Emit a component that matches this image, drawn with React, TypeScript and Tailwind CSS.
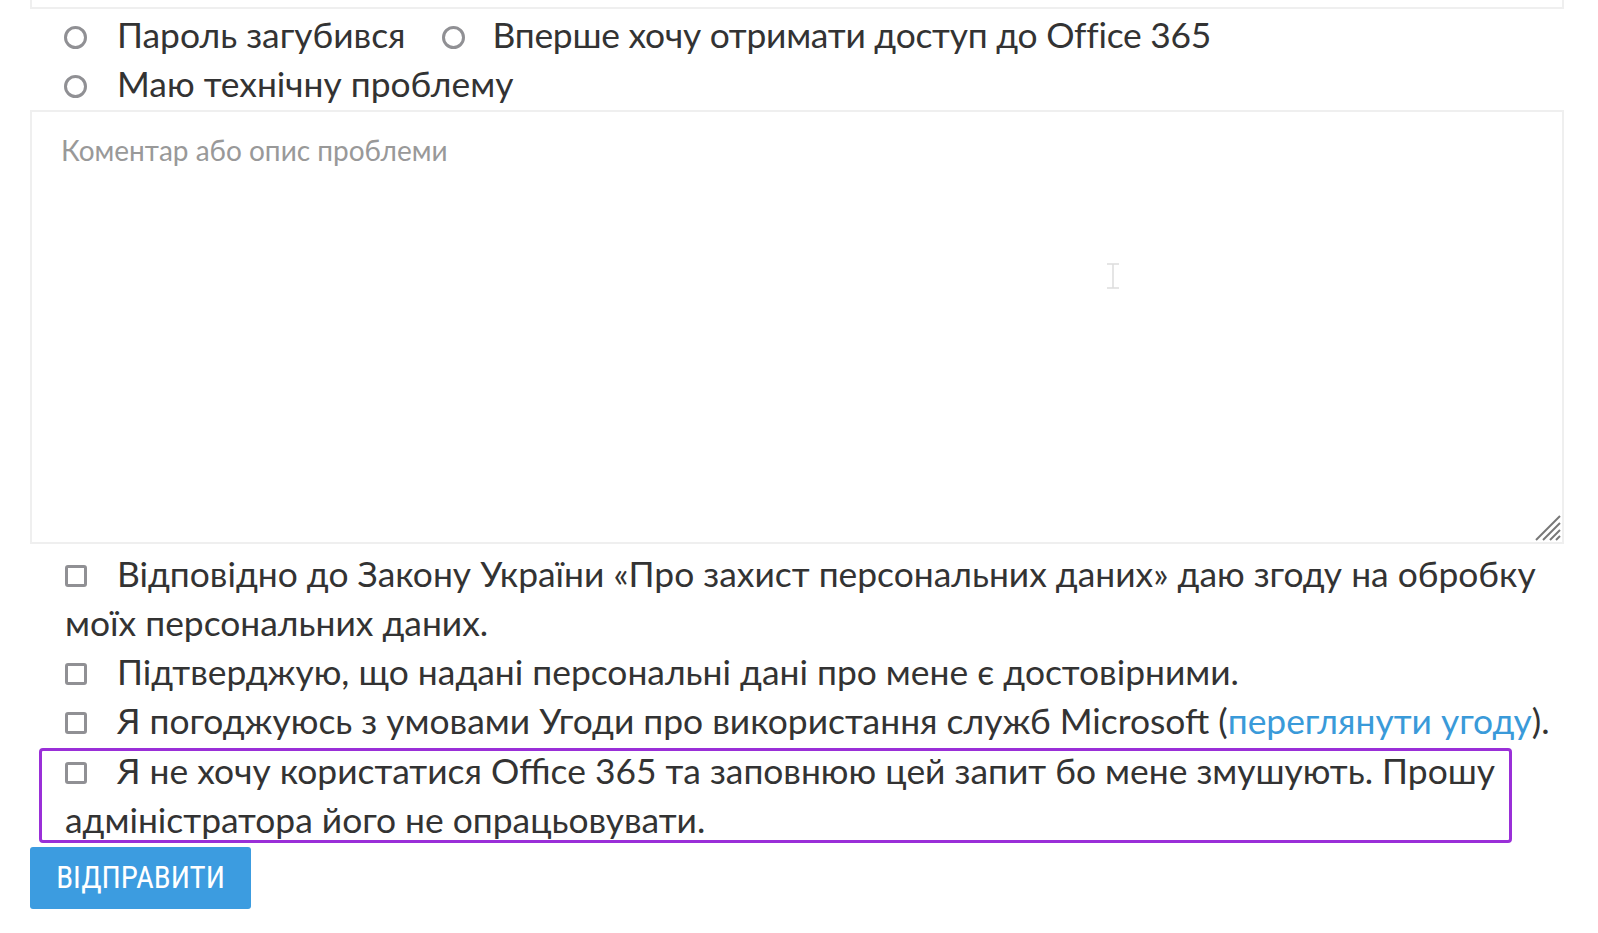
import { useState } from 'react';

const consents = [
  {
    id: 'pd',
    text: 'Відповідно до Закону України «Про захист персональних даних» даю згоду на обробку моїх персональних даних.',
  },
  {
    id: 'true',
    text: 'Підтверджую, що надані персональні дані про мене є достовірними.',
  },
];

function Radio() {
  return <span className="inline-block w-[23px] h-[23px] mt-[5px] rounded-full border-[3px] border-[#909094] bg-white shrink-0" />;
}

function Box() {
  return <span className="inline-block w-[22px] h-[22px] rounded-[3px] border-[3px] border-[#909094] bg-white mr-[30px] align-[0px]" />;
}

export default function App() {
  const [comment, setComment] = useState('');

  return (
    <div className="w-[1598px] h-[933px] overflow-hidden bg-white text-[#333] font-['Lato',sans-serif]">
      <div className="ml-[30px] w-[1534px]">
        {/* bottom edge of the field above */}
        <div className="h-[9px] border-x-2 border-b-2 border-[#efefef]" />

        {/* reason radios */}
        <div className="pl-[34px] pt-[1px] pb-[2px] text-[35.4px] leading-[49px]">
          <div className="flex items-center">
            <label className="flex items-center mr-[36px]">
              <Radio />
              <span className="ml-[30px]">Пароль загубився</span>
            </label>
            <label className="flex items-center">
              <Radio />
              <span className="ml-[28px] tracking-[-0.25px]">Вперше хочу отримати доступ до Office 365</span>
            </label>
          </div>
          <label className="flex items-center">
            <Radio />
            <span className="ml-[30px]">Маю технічну проблему</span>
          </label>
        </div>

        {/* comment */}
        <div className="relative">
          <textarea
            value={comment}
            onChange={(e) => setComment(e.target.value)}
            placeholder="Коментар або опис проблеми"
            className="block w-full h-[434px] resize-none border-2 border-[#efefef] pl-[29px] pr-[29px] pt-[18px] text-[28px] leading-[41px] font-['Lato',sans-serif] text-[#333] placeholder:text-[#999] outline-none"
          />
          <svg className="absolute right-[3px] bottom-[3px]" width="26" height="26" viewBox="0 0 26 26">
            <g stroke="#777" strokeWidth="2">
              <line x1="1" y1="25" x2="25" y2="1" />
              <line x1="8" y1="25" x2="25" y2="8" />
              <line x1="15" y1="25" x2="25" y2="15" />
              <line x1="21" y1="25" x2="25" y2="21" />
            </g>
          </svg>
          {/* mouse cursor */}
          <svg className="absolute left-[1075px] top-[153px]" width="16" height="26" viewBox="0 0 16 26">
            <g stroke="#dcdcdc" strokeWidth="1.5" fill="none">
              <line x1="2" y1="1" x2="14" y2="1" />
              <line x1="8" y1="1" x2="8" y2="25" />
              <line x1="2" y1="25" x2="14" y2="25" />
            </g>
          </svg>
        </div>

        {/* consents */}
        <div className="pt-[5px] text-[35.4px] leading-[49px]">
          {consents.map((c) => (
            <p key={c.id} className="pl-[35px]">
              <Box />
              {c.text}
            </p>
          ))}
          <p className="pl-[35px]">
            <Box />
            Я погоджуюсь з умовами Угоди про використання служб Microsoft (
            <a href="#" className="text-[#3a9ad9]">переглянути угоду</a>).
          </p>
          <div className="mt-[3px] ml-[9px] w-[1473px] h-[95px] border-[3px] border-[#9a2fd8] rounded-[4px] pl-[23px]">
            <p className="-mt-[5px]">
              <Box />
              Я не хочу користатися Office 365 та заповнюю цей запит бо мене змушують. Прошу адміністратора його не опрацьовувати.
            </p>
          </div>
        </div>

        <button className="mt-[4px] w-[221px] h-[62px] rounded-[3px] bg-[#3c9ce0] text-white text-[31px] uppercase font-['Roboto_Condensed',sans-serif]">
          Відправити
        </button>
      </div>
    </div>
  );
}
